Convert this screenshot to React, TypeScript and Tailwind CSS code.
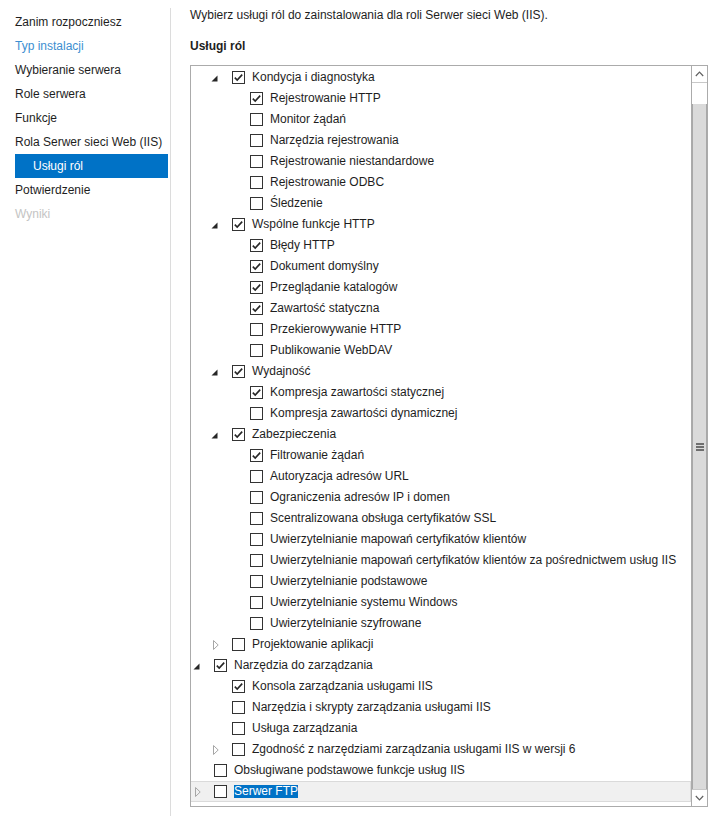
import React from "react";

type Row = {
  level: number;
  label: string;
  checked?: boolean;
  expander?: "open" | "closed";
  selected?: boolean;
};

const rows: Row[] = [
  { level: 1, label: "Kondycja i diagnostyka", checked: true, expander: "open" },
  { level: 2, label: "Rejestrowanie HTTP", checked: true },
  { level: 2, label: "Monitor żądań" },
  { level: 2, label: "Narzędzia rejestrowania" },
  { level: 2, label: "Rejestrowanie niestandardowe" },
  { level: 2, label: "Rejestrowanie ODBC" },
  { level: 2, label: "Śledzenie" },
  { level: 1, label: "Wspólne funkcje HTTP", checked: true, expander: "open" },
  { level: 2, label: "Błędy HTTP", checked: true },
  { level: 2, label: "Dokument domyślny", checked: true },
  { level: 2, label: "Przeglądanie katalogów", checked: true },
  { level: 2, label: "Zawartość statyczna", checked: true },
  { level: 2, label: "Przekierowywanie HTTP" },
  { level: 2, label: "Publikowanie WebDAV" },
  { level: 1, label: "Wydajność", checked: true, expander: "open" },
  { level: 2, label: "Kompresja zawartości statycznej", checked: true },
  { level: 2, label: "Kompresja zawartości dynamicznej" },
  { level: 1, label: "Zabezpieczenia", checked: true, expander: "open" },
  { level: 2, label: "Filtrowanie żądań", checked: true },
  { level: 2, label: "Autoryzacja adresów URL" },
  { level: 2, label: "Ograniczenia adresów IP i domen" },
  { level: 2, label: "Scentralizowana obsługa certyfikatów SSL" },
  { level: 2, label: "Uwierzytelnianie mapowań certyfikatów klientów" },
  { level: 2, label: "Uwierzytelnianie mapowań certyfikatów klientów za pośrednictwem usług IIS" },
  { level: 2, label: "Uwierzytelnianie podstawowe" },
  { level: 2, label: "Uwierzytelnianie systemu Windows" },
  { level: 2, label: "Uwierzytelnianie szyfrowane" },
  { level: 1, label: "Projektowanie aplikacji", expander: "closed" },
  { level: 0, label: "Narzędzia do zarządzania", checked: true, expander: "open" },
  { level: 1, label: "Konsola zarządzania usługami IIS", checked: true },
  { level: 1, label: "Narzędzia i skrypty zarządzania usługami IIS" },
  { level: 1, label: "Usługa zarządzania" },
  { level: 1, label: "Zgodność z narzędziami zarządzania usługami IIS w wersji 6", expander: "closed" },
  { level: 0, label: "Obsługiwane podstawowe funkcje usług IIS" },
  { level: 0, label: "Serwer FTP", expander: "closed", selected: true },
];

const nav = [
  { label: "Zanim rozpoczniesz", tone: "text-[#1e1e1e]" },
  { label: "Typ instalacji", tone: "text-[#3d8fd1]" },
  { label: "Wybieranie serwera", tone: "text-[#1e1e1e]" },
  { label: "Role serwera", tone: "text-[#1e1e1e]" },
  { label: "Funkcje", tone: "text-[#1e1e1e]" },
  { label: "Rola Serwer sieci Web (IIS)", tone: "text-[#1e1e1e]" },
  { label: "Usługi ról", tone: "text-white", active: true },
  { label: "Potwierdzenie", tone: "text-[#1e1e1e]" },
  { label: "Wyniki", tone: "text-[#c4c4c4]" },
];

const indent = ["pl-[2px]", "pl-[20px]", "pl-[38px]"];

function Expander({ kind }: { kind?: "open" | "closed" }) {
  return (
    <span className="w-[21px] h-[21px] shrink-0 flex items-center">
      {kind === "open" && (
        <svg width="7" height="7" viewBox="0 0 7 7" className="mt-[2px]">
          <polygon points="0.5,6.5 6.5,6.5 6.5,0.5" fill="#262626" />
        </svg>
      )}
      {kind === "closed" && (
        <svg width="6" height="10" viewBox="0 0 6 10" className="ml-[2px]">
          <polygon points="0.5,0.5 5.2,5 0.5,9.5" fill="none" stroke="#a6a6a6" strokeWidth="1" />
        </svg>
      )}
    </span>
  );
}

function Checkbox({ checked }: { checked?: boolean }) {
  return (
    <span className="w-[13px] h-[13px] shrink-0 border border-[#333333] bg-white flex items-center justify-center">
      {checked && (
        <svg width="11" height="11" viewBox="0 0 11 11">
          <path d="M1.8 5.6 L4.2 8 L9.2 2.6" fill="none" stroke="#262626" strokeWidth="1.6" />
        </svg>
      )}
    </span>
  );
}

function TreeRow({ row }: { row: Row }) {
  return (
    <div
      className={`h-[21px] flex items-center ${indent[row.level]} ${
        row.selected ? "bg-[#f0f0f0] border-y border-r border-[#dadada]" : ""
      }`}
    >
      <Expander kind={row.expander} />
      <Checkbox checked={row.checked} />
      <span
        className={`ml-[7px] whitespace-nowrap leading-[13px] ${
          row.selected ? "bg-[#0072c6] text-white" : "text-[#1e1e1e]"
        }`}
      >
        {row.label}
      </span>
    </div>
  );
}

function Scrollbar() {
  return (
    <div className="w-[16px] shrink-0 border-l border-[#ababab] flex flex-col bg-white">
      <div className="h-[17px] border-b border-[#c8c8c8] flex items-center justify-center">
        <svg width="9" height="6" viewBox="0 0 9 6">
          <path d="M0.8 5 L4.5 1.2 L8.2 5" fill="none" stroke="#606060" strokeWidth="1.2" />
        </svg>
      </div>
      <div className="h-[21px]" />
      <div className="flex-1 bg-[#dadada] border-x border-[#a8a8a8] flex items-center justify-center">
        <div className="flex flex-col gap-[1px]">
          <div className="w-[8px] h-[2px] bg-[#6e6e6e]" />
          <div className="w-[8px] h-[2px] bg-[#6e6e6e]" />
          <div className="w-[8px] h-[2px] bg-[#6e6e6e]" />
        </div>
      </div>
      <div className="h-[17px] border-t border-[#c8c8c8] flex items-center justify-center">
        <svg width="9" height="6" viewBox="0 0 9 6">
          <path d="M0.8 1 L4.5 4.8 L8.2 1" fill="none" stroke="#606060" strokeWidth="1.2" />
        </svg>
      </div>
    </div>
  );
}

export default function App() {
  return (
    <div
      className="w-[728px] h-[816px] bg-white flex text-[12px] overflow-hidden"
      style={{ fontFamily: '"Segoe UI", "Liberation Sans", Arial, sans-serif' }}
    >
      {/* Wizard steps */}
      <div className="w-[170px] shrink-0 pt-[10px]">
        {nav.map((item) =>
          item.active ? (
            <div key={item.label} className="ml-[15px] w-[153px] h-[24px] leading-[24px] pl-[18px] bg-[#0072c6] text-white">
              {item.label}
            </div>
          ) : (
            <div key={item.label} className={`h-[24px] leading-[24px] pl-[15px] ${item.tone}`}>
              {item.label}
            </div>
          )
        )}
      </div>
      <div className="w-px mt-[8px] bg-[#dcdcdc]" />

      {/* Content */}
      <div className="flex-1 pl-[19px] pr-[19px]">
        <div className="pt-[7px] h-[23px] leading-[16px] text-[#1e1e1e]">
          Wybierz usługi ról do zainstalowania dla roli Serwer sieci Web (IIS).
        </div>
        <div className="mt-[15px] h-[20px] leading-[16px] font-bold text-[#1e1e1e]">Usługi ról</div>
        <div className="mt-[7px] w-[518px] h-[742px] border border-[#ababab] flex">
          <div className="flex-1 overflow-hidden pt-[1px]">
            {rows.map((r) => (
              <TreeRow key={r.label} row={r} />
            ))}
          </div>
          <Scrollbar />
        </div>
      </div>
    </div>
  );
}
